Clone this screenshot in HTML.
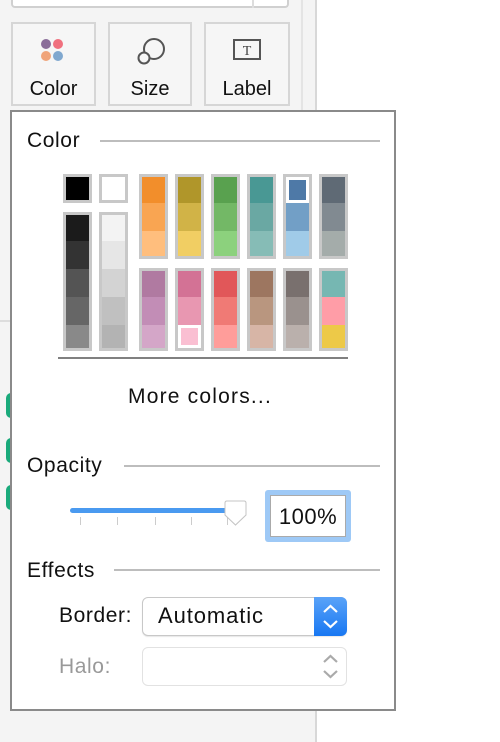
<!DOCTYPE html>
<html><head><style>
*{margin:0;padding:0;box-sizing:border-box}
body{width:500px;height:742px;position:relative;background:#fff;font-family:"Liberation Sans",sans-serif;overflow:hidden}
.a{position:absolute}
.col{position:absolute;width:29px;border:3px solid #c8c8c8;background:#c8c8c8}
.col div{width:100%}
.btn{position:absolute;top:22px;height:84px;border:2px solid #d6d6d6;background:#f6f6f6;text-align:center;font-size:20px;color:#111}
.btn span{position:absolute;left:0;right:0;top:54px}
.hd{position:absolute;font-size:21px;letter-spacing:0.6px;color:#111}
.ln{position:absolute;height:2px;background:#bdbdbd}
</style></head><body>
<div class="a" style="left:0;top:0;width:316px;height:742px;background:#f4f4f4"></div>
<div class="a" style="left:315px;top:0;width:2px;height:742px;background:#d8d8d8"></div>
<div class="a" style="left:301px;top:0;width:2px;height:110px;background:#e4e4e4"></div>
<div class="a" style="left:0;top:320px;width:12px;height:2px;background:#ddd"></div>
<div class="a" style="left:11px;top:-4px;width:278px;height:12px;border:2px solid #d0d0d0;border-top:none;border-radius:0 0 4px 4px;background:#fff"></div>
<div class="a" style="left:252px;top:0;width:2px;height:8px;background:#ddd"></div>
<div class="btn" style="left:11px;width:85px"><svg class="a" style="left:24px;top:14px" width="30" height="30"><circle cx="9" cy="6" r="5" fill="#8a6d99"/><circle cx="21" cy="6" r="5" fill="#f0707e"/><circle cx="9" cy="18" r="5" fill="#f0a47a"/><circle cx="21" cy="18" r="5" fill="#80a8cf"/></svg><span>Color</span></div>
<div class="btn" style="left:108px;width:84px"><svg class="a" style="left:24px;top:12px" width="34" height="34"><circle cx="20" cy="13" r="10" fill="none" stroke="#555" stroke-width="2"/><circle cx="10" cy="22" r="5.5" fill="#f6f6f6" stroke="#555" stroke-width="2"/></svg><span>Size</span></div>
<div class="btn" style="left:204px;width:86px"><svg class="a" style="left:26px;top:14px" width="32" height="26"><rect x="2" y="2" width="26" height="19" fill="none" stroke="#555" stroke-width="2"/><text x="15" y="17" font-size="14" font-family="Liberation Serif" text-anchor="middle" fill="#444">T</text></svg><span>Label</span></div>
<div class="a" style="left:6px;top:393px;width:10px;height:25px;border-radius:12px;background:#1aaa7b"></div>
<div class="a" style="left:6px;top:438px;width:10px;height:25px;border-radius:12px;background:#1aaa7b"></div>
<div class="a" style="left:6px;top:485px;width:10px;height:25px;border-radius:12px;background:#1aaa7b"></div>

<div class="a" style="left:10px;top:110px;width:386px;height:601px;border:2px solid #8a8a8a;background:#fff"></div>
<div class="hd" style="left:27px;top:129px">Color</div><div class="ln" style="left:100px;top:140px;width:280px"></div>

<div class="col" style="left:63px;top:174px;height:29px"><div style="height:23px;background:#000"></div></div>
<div class="col" style="left:99px;top:174px;height:29px"><div style="height:23px;background:#fff"></div></div>
<div class="col" style="left:63px;top:212px;height:139px"><div style="height:26px;background:#1b1b1b"></div><div style="height:28px;background:#333"></div><div style="height:28px;background:#545454"></div><div style="height:28px;background:#666"></div><div style="height:23px;background:#898989"></div></div>
<div class="col" style="left:99px;top:212px;height:139px"><div style="height:26px;background:#f3f3f3"></div><div style="height:28px;background:#e6e6e6"></div><div style="height:28px;background:#d3d3d3"></div><div style="height:28px;background:#c0c0c0"></div><div style="height:23px;background:#b3b3b3"></div></div>

<div class="col" style="left:139px;top:174px;height:85px"><div style="height:26px;background:#f28e2b"></div><div style="height:28px;background:#f9a552"></div><div style="height:25px;background:#ffbe7d"></div></div>
<div class="col" style="left:175px;top:174px;height:85px"><div style="height:26px;background:#b0962a"></div><div style="height:28px;background:#d1b347"></div><div style="height:25px;background:#f1ce63"></div></div>
<div class="col" style="left:211px;top:174px;height:85px"><div style="height:26px;background:#59a14f"></div><div style="height:28px;background:#73b866"></div><div style="height:25px;background:#8cd17d"></div></div>
<div class="col" style="left:247px;top:174px;height:85px"><div style="height:26px;background:#499894"></div><div style="height:28px;background:#6aa8a3"></div><div style="height:25px;background:#86bcb6"></div></div>
<div class="col" style="left:283px;top:174px;height:85px"><div style="height:26px;background:#4e79a7;border:3px solid #fff"></div><div style="height:28px;background:#729fc6"></div><div style="height:25px;background:#a0cbe8"></div></div>
<div class="col" style="left:319px;top:174px;height:85px"><div style="height:26px;background:#5f6a75"></div><div style="height:28px;background:#818a91"></div><div style="height:25px;background:#a4acaa"></div></div>

<div class="col" style="left:139px;top:268px;height:83px"><div style="height:26px;background:#b07aa1"></div><div style="height:28px;background:#c28db6"></div><div style="height:23px;background:#d4a6c8"></div></div>
<div class="col" style="left:175px;top:268px;height:83px"><div style="height:26px;background:#d37295"></div><div style="height:28px;background:#e897b1"></div><div style="height:23px;background:#fabfd2;border:3px solid #fff"></div></div>
<div class="col" style="left:211px;top:268px;height:83px"><div style="height:26px;background:#e15759"></div><div style="height:28px;background:#f07a75"></div><div style="height:23px;background:#ff9d9a"></div></div>
<div class="col" style="left:247px;top:268px;height:83px"><div style="height:26px;background:#9d7660"></div><div style="height:28px;background:#b9967f"></div><div style="height:23px;background:#d7b5a6"></div></div>
<div class="col" style="left:283px;top:268px;height:83px"><div style="height:26px;background:#79706e"></div><div style="height:28px;background:#9a918e"></div><div style="height:23px;background:#bab0ac"></div></div>
<div class="col" style="left:319px;top:268px;height:83px"><div style="height:26px;background:#76b7b2"></div><div style="height:28px;background:#ff9da7"></div><div style="height:23px;background:#edc948"></div></div>
<div class="a" style="left:58px;top:357px;width:290px;height:2px;background:#808080"></div>
<div class="a" style="left:128px;top:385px;font-size:21px;letter-spacing:1.2px;color:#111">More colors...</div>

<div class="hd" style="left:27px;top:454px">Opacity</div><div class="ln" style="left:124px;top:465px;width:256px"></div>
<div class="a" style="left:70px;top:508px;width:166px;height:5px;border-radius:3px;background:#4a9af0"></div>
<div class="a" style="left:80px;top:517px;width:1px;height:8px;background:#ccc"></div>
<div class="a" style="left:117px;top:517px;width:1px;height:8px;background:#ccc"></div>
<div class="a" style="left:155px;top:517px;width:1px;height:8px;background:#ccc"></div>
<div class="a" style="left:191px;top:517px;width:1px;height:8px;background:#ccc"></div>
<div class="a" style="left:227px;top:517px;width:1px;height:8px;background:#ccc"></div>
<svg class="a" style="left:222px;top:500px" width="28" height="30"><path d="M3 3 Q3 1 5 1 H22 Q24 1 24 3 V15 L13.5 25 L3 15 Z" fill="#fff" stroke="#c4c4c4" stroke-width="1"/></svg>
<div class="a" style="left:265px;top:490px;width:86px;height:52px;border-radius:3px;background:#9ec9f6"></div>
<div class="a" style="left:270px;top:495px;width:76px;height:42px;background:#fff;border:1px solid #aaa"></div>
<div class="a" style="left:271px;top:504px;width:74px;text-align:center;font-size:22px;letter-spacing:0.5px;color:#111">100%</div>

<div class="hd" style="left:27px;top:559px">Effects</div><div class="ln" style="left:114px;top:569px;width:266px"></div>
<div class="a" style="left:59px;top:604px;font-size:21px;letter-spacing:0.6px;color:#111">Border:</div>
<div class="a" style="left:142px;top:597px;width:205px;height:39px;border:1px solid #c8c8c8;border-radius:6px;background:#fff;box-shadow:0 1px 1px rgba(0,0,0,.1)"></div>
<div class="a" style="left:158px;top:603px;font-size:22px;letter-spacing:0.9px;color:#111">Automatic</div>
<div class="a" style="left:314px;top:597px;width:33px;height:39px;border-radius:0 6px 6px 0;background:linear-gradient(#5aa3f8,#1877f2)"></div>
<svg class="a" style="left:314px;top:597px" width="33" height="39"><path d="M10 15 L16.5 9 L23 15 M10 24 L16.5 30 L23 24" fill="none" stroke="#fff" stroke-width="2.2"/></svg>
<div class="a" style="left:59px;top:655px;font-size:21px;letter-spacing:0.6px;color:#999">Halo:</div>
<div class="a" style="left:142px;top:647px;width:205px;height:39px;border:1px solid #e2e2e2;border-radius:6px;background:#fff"></div>
<svg class="a" style="left:314px;top:647px" width="33" height="39"><path d="M10 15 L16.5 9 L23 15 M10 24 L16.5 30 L23 24" fill="none" stroke="#aaa" stroke-width="2.2"/></svg>
</body></html>
